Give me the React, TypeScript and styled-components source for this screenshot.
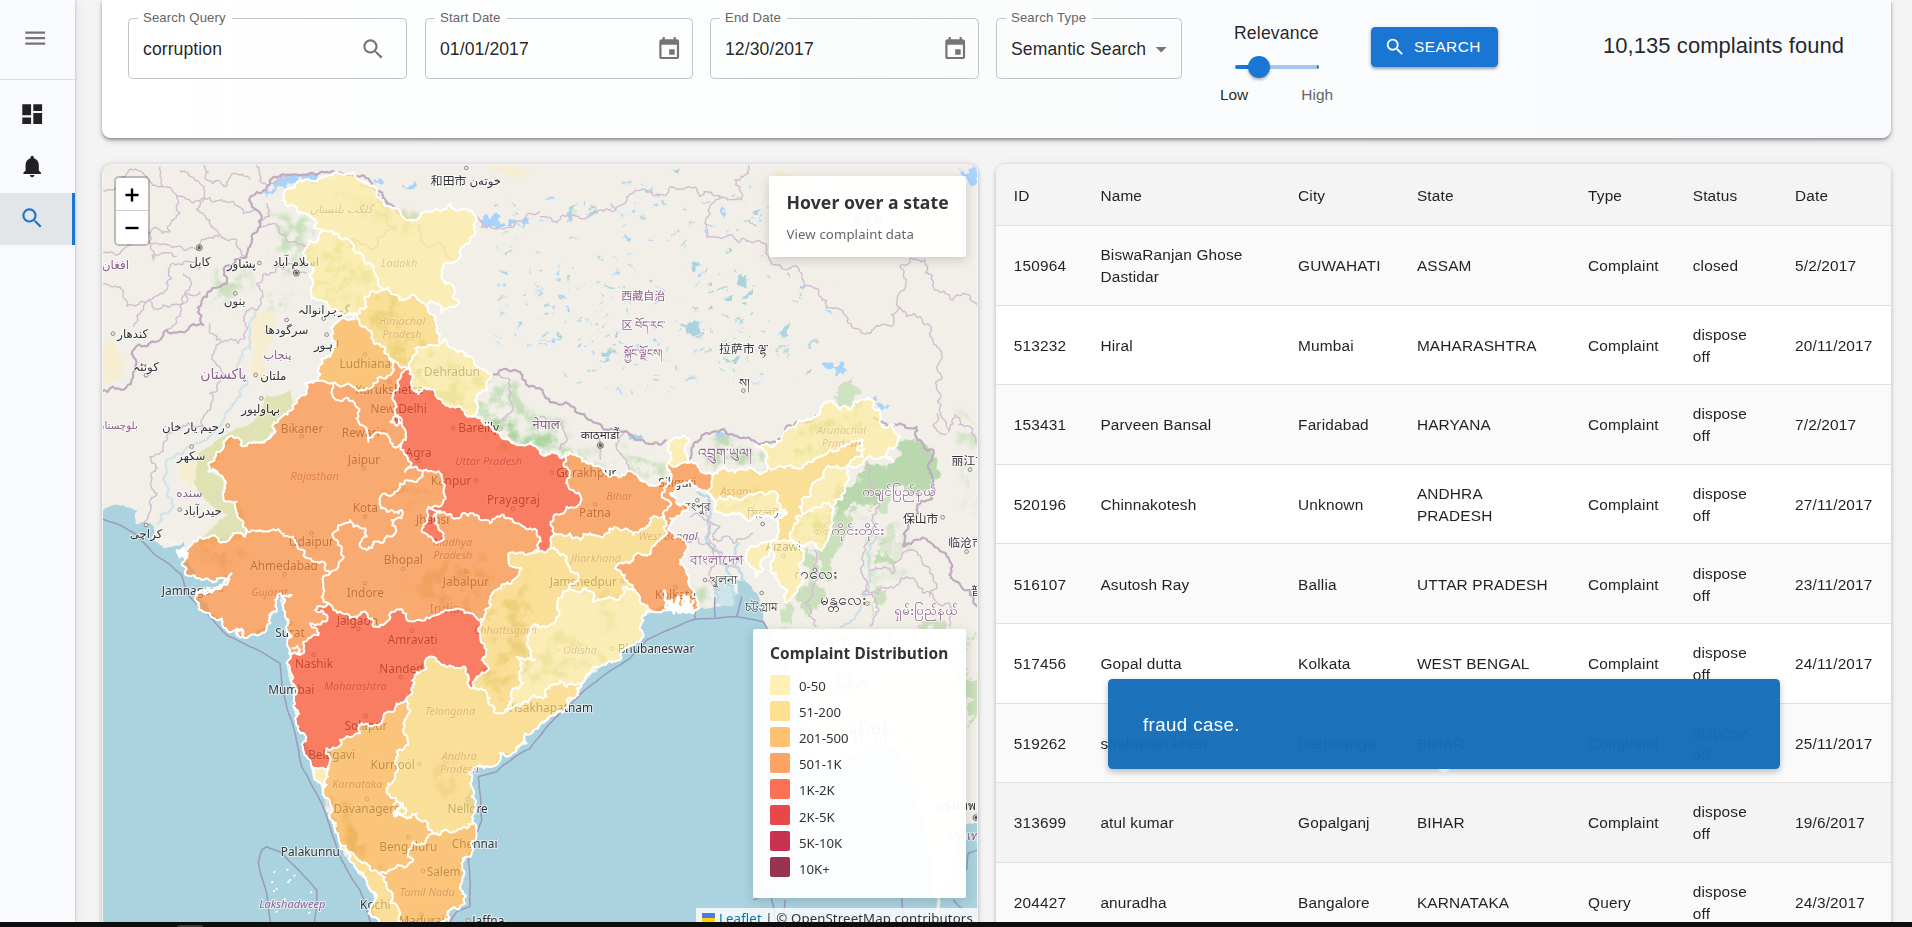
import React from 'react';
import styled, { createGlobalStyle } from 'styled-components';
import { MdArrowDropDown, MdDashboard, MdEvent, MdMenu, MdNotifications, MdSearch } from 'react-icons/md';

const GlobalStyle = createGlobalStyle`
  *, *::before, *::after { box-sizing: border-box; }
  html, body { margin: 0; height: 100%; overflow: hidden; }
  body {
    background: #f4f4f4;
    color: rgba(0, 0, 0, 0.87);
    font-family: "Liberation Sans", Arial, Helvetica, sans-serif;
    font-size: 15.4px;
  }
`;

/* ---------- page frame ---------- */

const Screen = styled.div`
  display: flex;
  flex-direction: column;
  width: 1912px;
  height: 927px;
  overflow: hidden;
`;

const Shell = styled.div`
  display: flex;
  height: 922px;
  overflow: hidden;
`;

const Dock = styled.div`
  flex: 1;
  background: #0e0e0e;
  padding: 3px 0 0 177px;
`;

const DockHandle = styled.div`
  width: 26px;
  height: 2px;
  border-radius: 6px 6px 0 0;
  background: #3c3c3c;
`;

const Sidebar = styled.nav`
  display: flex;
  flex-direction: column;
  flex: none;
  width: 75px;
  background: #f8fafd;
  box-shadow: 1px 0 2px rgba(0, 0, 0, 0.14), 3px 0 14px rgba(0, 0, 0, 0.05);
  z-index: 1;
`;

const MenuToggle = styled.div`
  display: flex;
  height: 80px;
  padding: 25px 0 0 22px;
  border-bottom: 1px solid #dcdee0;
  color: #757575;
  font-size: 26.4px;
`;

const NavList = styled.div`
  padding-top: 9px;
`;

const NavItem = styled.div<{ $active?: boolean }>`
  display: flex;
  align-items: center;
  height: 52px;
  padding: 0 0 1px 18.6px;
  font-size: 26.4px;
  color: ${p => (p.$active ? '#1976d2' : '#212121')};
  background: ${p => (p.$active ? '#e3e5e8' : 'transparent')};
  border-right: 3px solid ${p => (p.$active ? '#1976d2' : 'transparent')};
`;

const Main = styled.main`
  display: flex;
  flex-direction: column;
  width: 1837px;
  padding: 0 21px 0 27px;
`;

/* ---------- search form ---------- */

const FilterCard = styled.section`
  display: flex;
  align-items: flex-start;
  flex: none;
  height: 138px;
  padding: 18px 0 0 26px;
  border-radius: 0 0 9px 9px;
  background: linear-gradient(90deg, #ffffff 0%, #fbfdfd 50%, #f8fafd 100%);
  box-shadow: 0 2px 3px rgba(0, 0, 0, 0.3), 0 3px 6px rgba(0, 0, 0, 0.16);
`;

const Field = styled.div<{ $width: number; $gap?: number; $end?: number }>`
  position: relative;
  display: flex;
  align-items: center;
  justify-content: space-between;
  flex: none;
  width: ${p => p.$width}px;
  height: 61px;
  margin-right: ${p => p.$gap ?? 18}px;
  padding: 1px ${p => p.$end ?? 10}px 0 14px;
  border: 1px solid #c3c4c4;
  border-radius: 4.4px;
  font-size: 17.6px;
  letter-spacing: 0.08px;
`;

const FieldLabel = styled.label`
  position: absolute;
  top: -10px;
  left: 9px;
  padding: 0 6px 0 5px;
  background: #fdfefe;
  color: #666;
  font-size: 13.2px;
  line-height: 17px;
  letter-spacing: 0.12px;
`;

const FieldIcon = styled.span`
  display: flex;
  color: #757575;
  font-size: 26.4px;
`;

const Relevance = styled.div`
  display: flex;
  flex-direction: column;
  width: 116px;
  margin-left: 37px;
  padding-top: 5px;
`;

const RelevanceTitle = styled.div`
  padding-left: 15px;
  font-size: 17.6px;
  line-height: 20px;
  letter-spacing: 0.16px;
`;

const Track = styled.div`
  display: flex;
  align-items: center;
  width: 84px;
  height: 4px;
  margin: 22px 0 0 16px;
  border-radius: 2px;
  background: linear-gradient(90deg, #1976d2 0 24px, #a4c8ee 24px 82px, #1976d2 82px);
`;

const Thumb = styled.div`
  width: 22px;
  height: 22px;
  margin-left: 13px;
  border-radius: 50%;
  background: #1976d2;
  box-shadow: 0 2px 3px rgba(0, 0, 0, 0.3);
`;

const Marks = styled.div`
  display: flex;
  justify-content: space-between;
  padding: 17px 2px 0 1px;
  font-size: 15.4px;
  line-height: 18px;
`;

const MarkMuted = styled.span`
  color: #666;
`;

const SearchButton = styled.button`
  display: flex;
  align-items: center;
  gap: 8px;
  width: 127px;
  height: 40px;
  margin: 9px 0 0 36px;
  padding: 0 0 0 13px;
  border: 0;
  border-radius: 4.4px;
  background: #1976d2;
  color: #fff;
  font-family: inherit;
  font-size: 15.4px;
  letter-spacing: 0.44px;
  box-shadow: 0 2px 3px rgba(0, 0, 0, 0.3), 0 1px 5px rgba(0, 0, 0, 0.12);

  svg { font-size: 22px; }
`;

const ResultCount = styled.div`
  margin: 14px 0 0 105px;
  font-size: 22px;
  line-height: 28px;
  letter-spacing: 0.06px;
  white-space: nowrap;
`;

const Panels = styled.div`
  display: flex;
  align-items: flex-start;
  gap: 18px;
  padding-top: 26px;
`;

/* ---------- complaints table ---------- */

const TableCard = styled.section`
  position: relative;
  width: 895px;
  height: 790px;
  border-radius: 9px 9px 0 0;
  background: #fff;
  box-shadow: 0 1px 4px rgba(0, 0, 0, 0.22), 0 0 12px rgba(0, 0, 0, 0.05);
`;

const TableRow = styled.div<{ $tone: string; $head?: boolean }>`
  display: grid;
  grid-template-columns: 86.6px 197.7px 118.8px 171.2px 104.7px 102.3px 113.3px;
  align-items: center;
  height: ${p => (p.$head ? 62 : 79.6)}px;
  padding-top: 2px;
  border-bottom: 1px solid #e0e0e0;
  border-radius: ${p => (p.$head ? '9px 9px 0 0' : 0)};
  background: ${p => p.$tone};
`;

const Cell = styled.div`
  padding: 0 0 0 17.8px;
  line-height: 22px;
  letter-spacing: 0.16px;
`;

const Tooltip = styled.div`
  position: absolute;
  top: 515px;
  left: 112px;
  display: flex;
  align-items: center;
  width: 672px;
  height: 90px;
  padding: 1px 35px 0;
  border-radius: 4.4px;
  background: rgba(21, 109, 184, 0.97);
  color: #fff;
  font-size: 18.7px;
  letter-spacing: 0.4px;
  box-shadow: 0 3px 7px rgba(0, 0, 0, 0.26);
`;

const TooltipArrow = styled.span`
  position: absolute;
  top: 90px;
  left: 330px;
  border: 6px solid transparent;
  border-top: 5px solid #dfe9f2;
  border-bottom: 0;
`;

/* ---------- map ---------- */

const MapCard = styled.section`
  position: relative;
  width: 876px;
  height: 790px;
  padding: 1px;
  border-radius: 9px 9px 0 0;
  font-family: "Noto Sans", "Noto Sans CJK SC", "DejaVu Sans", sans-serif;
  box-shadow: 0 1px 4px rgba(0, 0, 0, 0.26), 0 0 12px rgba(0, 0, 0, 0.05);
`;

const MapCanvas = styled.svg`
  display: block;
  border-radius: 8px 8px 0 0;
`;

const ZoomControl = styled.div`
  position: absolute;
  top: 12px;
  left: 12px;
  width: 36px;
  border: 2px solid rgba(0, 0, 0, 0.22);
  border-radius: 5px;
  background-clip: padding-box;
`;

const ZoomButton = styled.div<{ $first?: boolean }>`
  display: flex;
  align-items: center;
  justify-content: center;
  height: 33px;
  padding-top: 1px;
  background: #fff;
  border-bottom: ${p => (p.$first ? '1px solid #ccc' : '0')};
  border-radius: ${p => (p.$first ? '3px 3px 0 0' : '0 0 3px 3px')};
`;

const MapPanel = styled.div`
  position: absolute;
  right: 12px;
  border-radius: 2px;
  background: rgba(255, 255, 255, 0.95);
  box-shadow: 0 3px 12px rgba(0, 0, 0, 0.16);
`;

const InfoPanel = styled(MapPanel)`
  top: 12px;
  width: 197px;
  height: 81px;
  padding: 13px 0 0 17.5px;
`;

const InfoTitle = styled.div`
  color: #333;
  font-size: 17.6px;
  font-weight: 700;
  line-height: 27px;
  letter-spacing: 0.07px;
  white-space: nowrap;
`;

const InfoText = styled.div`
  margin-top: 8px;
  color: #666;
  font-size: 13.2px;
  line-height: 20px;
  letter-spacing: 0.12px;
`;

const LegendPanel = styled(MapPanel)`
  top: 465px;
  width: 213px;
  height: 269px;
  padding: 12px 0 0 17px;
`;

const LegendTitle = styled.div`
  margin-bottom: 7px;
  color: #333;
  font-size: 15.4px;
  font-weight: 700;
  line-height: 25px;
  letter-spacing: 0.12px;
  white-space: nowrap;
`;

const LegendRow = styled.div`
  display: flex;
  align-items: center;
  height: 26.1px;
  gap: 9px;
  color: #333;
  font-size: 13.2px;
`;

const Swatch = styled.span<{ $color: string }>`
  width: 20px;
  height: 20px;
  margin-top: -3px;
  border-radius: 2px;
  background: ${p => p.$color};
  opacity: 0.8;
`;

const Attribution = styled.div`
  position: absolute;
  top: 744px;
  right: 1px;
  display: flex;
  align-items: center;
  width: 281px;
  height: 20px;
  padding-left: 6px;
  background: rgba(255, 255, 255, 0.8);
  color: #333;
  font-size: 13.2px;
  letter-spacing: 0.13px;
  white-space: pre;

  a { color: #0078a8; text-decoration: underline; }
`;

const Flag = styled.span`
  width: 13px;
  height: 9px;
  margin: -2px 4px 0 0;
  background: linear-gradient(#4c7be1 50%, #ffd500 50%);
`;

/* ---------- map geometry ---------- */

type Point = [number, number];

const pts = (source: string): Point[] =>
  source.trim().split(/\s+/).map(pair => pair.split(',').map(Number) as Point);

const noise = (a: number, b: number) => {
  const value = Math.sin(a * 12.9898 + b * 78.233) * 43758.5453;
  return value - Math.floor(value) - 0.5;
};

// Splits a segment into a ragged line; both directions give the same line.
function rough(a: Point, b: Point, amount: number): Point[] {
  if (a[0] > b[0] || (a[0] === b[0] && a[1] > b[1])) {
    return rough(b, a, amount).reverse();
  }
  const dx = b[0] - a[0];
  const dy = b[1] - a[1];
  const length = Math.hypot(dx, dy);
  if (!(length >= 9)) return [a, b];
  const shift = noise(a[0] + b[0], a[1] + b[1]) * amount;
  const mid: Point = [
    Math.round((a[0] + dx / 2 - dy * shift) * 10) / 10,
    Math.round((a[1] + dy / 2 + dx * shift) * 10) / 10,
  ];
  return [...rough(a, mid, amount), ...rough(mid, b, amount).slice(1)];
}

const stateRoughness = 0.62;

const roughLine = (line: Point[], amount = stateRoughness): Point[] =>
  line.flatMap((p, i) => (i === 0 ? [p] : rough(line[i - 1], p, amount).slice(1)));

const toPath = (line: Point[]) => 'M' + line.map(p => p.join(',')).join('L');
const line = (source: string, amount?: number) => toPath(roughLine(pts(source), amount));

const arcs: Record<string, string> = {
  ladakhOuter: '668,212 640,205 652,190 635,172 598,160 590,140 560,137 549,118 566,85 592,65 630,62 655,55 680,48 710,34 740,42 758,36 780,62 810,78 850,120 890,145 915,178 955,176 980,155 1040,147 1052,132 1065,150 1100,148 1128,172 1124,200 1110,245 1085,262 1065,305 1030,315 1025,345 1035,372 1062,382 1058,410 1076,432 1050,440 1025,458 1015,432 980,436',
  ladakhHp: '980,436 960,422 935,403 915,420 890,405 865,385',
  ladakhJk: '865,385 830,350 820,318 790,295 760,265 748,238 725,238 700,215 668,212',
  jkWest: '668,212 655,238 615,265 628,310 630,350 632,398 680,425 710,450 770,462',
  jkHp: '770,462 800,440 795,410 835,395 865,385',
  pbHp: '770,462 778,485 805,510 820,545 850,560 868,595',
  hpEast: '980,436 1000,465 1012,500 1020,550',
  hpUk: '1020,550 985,555 945,565 935,600 930,628',
  hpHr: '930,628 905,625 885,605 868,595',
  ukOuter: '1020,550 1035,537 1070,575 1110,590 1145,625 1175,642 1165,660 1137,700 1130,730 1110,768',
  ukUp: '1110,768 1100,768 1050,742 1010,710 985,688 955,702 935,685 940,650 930,628',
  pbWest: '770,462 745,480 705,490 700,520 708,560 690,590 655,620 650,662',
  pbRj: '650,662 670,663 698,670',
  pbHr: '698,670 720,680 745,670 770,690 800,685 820,670 840,650 875,640 880,615 868,595',
  hrRj: '698,670 698,705 735,715 765,735 770,775 800,810 805,845 820,825 850,820 865,830 880,860 905,850',
  hrUp: '930,628 900,655 893,690 890,740 905,790 918,820 918,840 905,850',
  rjWest: '650,662 615,668 600,710 580,745 540,775 500,838 460,845 425,858 400,832 370,845 360,875 325,910 325,935 370,955 368,1000 380,1025 410,1025 412,1060 430,1085 440,1110',
  rjGj: '440,1110 480,1110 520,1108 545,1120 580,1130 590,1150 610,1170 625,1195 650,1205 690,1240',
  rjMp: '690,1240 715,1220 730,1195 725,1160 710,1140 715,1095 735,1090 750,1080 760,1100 795,1105 800,1130 780,1160 800,1170 820,1145 850,1148 870,1130 875,1080 905,1075 905,1050 860,1055 840,1025 855,1000 920,960 970,932',
  rjUp: '905,850 912,880 935,910 915,935 950,920 970,932',
  mpUp: '970,932 1000,935 1025,945 1035,975 1015,1040 985,1045 985,1070 970,1095 985,1130 1020,1145 1025,1115 1005,1090 1010,1060 1055,1065 1075,1075 1090,1058 1120,1060 1160,1080 1170,1090 1190,1070 1230,1075 1250,1090 1290,1105 1310,1120 1315,1150 1300,1178',
  upJh: '1362,1120 1352,1145 1350,1165',
  upCg: '1350,1165 1325,1172 1300,1178',
  upBr: '1362,1120 1352,1085 1360,1070 1400,1040 1445,1018 1415,990 1400,960 1410,940 1393,920 1395,885 1410,878',
  upNorth: '1110,768 1150,790 1200,820 1250,855 1320,880 1365,880 1385,895 1410,878',
  brNorth: '1410,878 1440,890 1460,910 1510,935 1540,945 1580,935 1630,965 1680,970 1710,970',
  brWb: '1710,970 1685,1005 1705,1020 1700,1050 1690,1065',
  brJh: '1690,1065 1650,1075 1635,1105 1600,1125 1560,1110 1530,1105 1510,1130 1470,1120 1440,1140 1410,1120 1362,1120',
  skOuter: '1705,908 1705,850 1720,835 1750,825 1765,850 1762,908',
  skWb: '1705,908 1762,908',
  wbWest: '1705,908 1715,945 1710,970',
  wbNorth: '1762,908 1800,930 1840,942',
  wbAs: '1840,942 1835,975 1825,1000',
  wbEast: '1825,1000 1790,990 1770,960 1730,975 1710,1000 1730,1030 1765,1050 1740,1068 1710,1075 1705,1110 1725,1135 1750,1140 1740,1200 1760,1240 1765,1270 1780,1290 1780,1360',
  wbCoast: '1780,1360 1750,1355 1710,1330 1690,1350 1660,1355',
  wbJh: '1690,1065 1700,1085 1700,1115 1690,1130 1665,1155 1600,1190 1565,1210 1545,1225 1575,1245 1585,1270 1605,1290',
  wbOd: '1605,1290 1620,1325 1645,1345 1660,1355',
  jhOd: '1605,1290 1570,1280 1550,1320 1520,1315 1480,1325 1475,1295 1410,1290',
  jhCg: '1410,1290 1430,1265 1410,1225 1400,1190 1370,1170 1350,1165',
  odCg: '1410,1290 1385,1310 1370,1345 1360,1390 1330,1398 1300,1395 1280,1430 1285,1460 1305,1500 1250,1490 1265,1530 1270,1570 1235,1620 1215,1655',
  odAp: '1215,1655 1260,1640 1300,1605 1340,1610 1355,1575 1380,1560 1400,1580 1425,1575 1445,1570',
  odCoast: '1660,1355 1625,1370 1620,1410 1630,1430 1590,1460 1560,1500 1500,1520 1445,1570',
  apCoast: '1445,1570 1400,1620 1350,1670 1320,1692 1275,1720 1280,1750 1250,1770 1200,1780 1175,1820 1130,1820 1110,1870 1115,1910 1125,1955 1120,1990',
  apTn: '1120,1990 1100,2005 1060,2015 1020,2025 1000,2020',
  apKa: '1000,2020 985,1990 950,1960 910,1970 880,1960 900,1930 870,1910 865,1870 885,1840 890,1800 915,1760 910,1690 930,1650 920,1615',
  apMh: '920,1615 940,1580 945,1545 980,1525 980,1495 1020,1510 1060,1520 1095,1520 1100,1570 1120,1585',
  apCg: '1120,1585 1160,1600 1165,1630 1185,1660 1215,1655',
  mhCg: '1120,1585 1130,1550 1165,1530 1145,1500 1150,1450 1140,1400 1150,1378',
  mhMp: '1150,1378 1110,1360 1050,1350 1010,1365 950,1380 920,1380 905,1348 875,1355 850,1395 820,1400 815,1375 750,1375 700,1350 685,1330',
  mpCg: '1150,1378 1155,1350 1170,1310 1190,1290 1235,1270 1265,1225 1225,1195 1230,1178 1300,1178',
  mpGj: '685,1330 665,1310 670,1285 690,1240',
  mhGj: '685,1330 645,1350 680,1365 630,1390 655,1425 610,1445 600,1485 568,1480',
  gjCoast: '440,1110 435,1130 370,1145 280,1142 230,1170 255,1195 245,1215 290,1255 340,1268 395,1240 380,1275 340,1290 290,1295 285,1315 330,1360 380,1410 430,1430 500,1400 530,1355 525,1320 540,1300 575,1305 550,1310 550,1345 565,1390 575,1430 568,1480',
  mhCoast: '568,1480 560,1510 575,1570 580,1640 595,1700 610,1770 635,1820',
  mhGoa: '635,1820 662,1824 685,1820',
  goaCoast: '635,1820 655,1865 668,1890',
  goaKa: '668,1890 680,1875 680,1840 685,1820',
  mhKa: '685,1820 690,1790 680,1765 720,1740 780,1720 785,1690 830,1695 850,1670 890,1630 920,1615',
  kaCoast: '668,1890 690,1930 708,1990 720,2050',
  kaKl: '720,2050 760,2080 800,2110 835,2140',
  kaTn: '835,2140 870,2130 920,2120 940,2100 925,2070 940,2045 975,2050 1000,2020',
  klCoast: '720,2050 760,2110 800,2170 820,2230 840,2300',
  klTn: '835,2140 860,2175 870,2230 895,2245 900,2300',
  klEnd: '840,2300 900,2300',
  tnCoast: '1120,1990 1130,2020 1120,2070 1085,2110 1090,2150 1095,2230 1050,2250 1020,2300',
  tnEnd: '900,2300 1020,2300',
  asAr: '2240,920 2290,890 2295,865 2270,870 2290,840 2250,850 2190,870 2140,905 2110,915 2070,915 2005,925',
  arOuter: '2005,925 2000,880 1965,852 2000,850 2045,840 2060,810 2095,780 2140,772 2170,730 2200,722 2255,745 2280,720 2305,712 2320,745 2340,790 2400,830 2365,865 2380,905 2350,890 2300,895 2240,920',
  asNorth: '2005,925 1970,935 1840,942',
  asBd: '1825,1000 1836,1012 1845,1025',
  asMl: '1845,1025 1860,1010 1930,1015 1970,1000 2010,995 2040,1030 2060,1060',
  mlBd: '2060,1060 2020,1075 1970,1065 1845,1055 1845,1025',
  asTr: '2060,1060 2025,1080 2022,1140',
  asMz: '2022,1140 2045,1142 2072,1140',
  asMn: '2072,1140 2080,1100 2115,1060',
  asNl: '2115,1060 2098,1040 2130,1010 2150,960 2240,920',
  nlOuter: '2240,920 2235,975 2225,1020 2195,1040',
  nlMn: '2195,1040 2150,1042 2115,1060',
  mnOuter: '2195,1040 2200,1055 2190,1100 2165,1172 2105,1160 2072,1140',
  mzOuter: '2072,1140 2105,1170 2100,1240 2085,1300 2060,1330 2035,1260 2020,1200 2015,1170 2022,1140',
  trOuter: '2022,1140 1980,1150 1940,1180 1945,1210 1960,1225 1970,1250 1990,1230 1992,1195 2015,1170',
};

const shades = ['#ffeda0', '#fed976', '#feb24c', '#fd8d3c', '#fc4e2a', '#e31a1c', '#bd0026', '#800026'];
const ranges = ['0-50', '51-200', '201-500', '501-1K', '1K-2K', '2K-5K', '5K-10K', '10K+'];

// Each state: shade index, then the arcs of its outline in order.
const states: [number, string][] = [
  [0, 'ladakhOuter ladakhHp ladakhJk'],
  [0, 'jkWest jkHp ladakhJk'],
  [1, 'pbHp hpHr hpUk hpEast ladakhHp jkHp'],
  [0, 'ukOuter ukUp hpUk'],
  [2, 'pbHp pbHr pbRj pbWest'],
  [3, 'pbHr hpHr hrUp hrRj'],
  [3, 'pbRj hrRj rjUp rjMp rjGj rjWest'],
  [4, 'hrUp rjUp mpUp upCg upJh upBr upNorth ukUp'],
  [3, 'rjMp mpUp mpCg mhMp mpGj'],
  [3, 'rjGj mpGj mhGj gjCoast'],
  [3, 'brNorth brWb brJh upBr'],
  [0, 'skOuter skWb'],
  [3, 'skWb wbNorth wbAs wbEast wbCoast wbOd wbJh brWb wbWest'],
  [1, 'brJh upJh jhCg jhOd wbJh'],
  [1, 'jhCg upCg mpCg mhCg apCg odCg'],
  [0, 'jhOd odCg odAp odCoast wbOd'],
  [1, 'odAp apCoast apTn apKa apMh apCg'],
  [4, 'mhMp mhGj mhCoast mhGoa mhKa apMh mhCg'],
  [0, 'goaCoast goaKa mhGoa'],
  [2, 'mhKa apKa kaTn kaKl kaCoast goaKa'],
  [1, 'kaKl klTn klEnd klCoast'],
  [2, 'kaTn apTn tnCoast tnEnd klTn'],
  [0, 'asAr arOuter'],
  [1, 'asNorth wbAs asBd asMl asTr asMz asMn asNl asAr'],
  [0, 'asMl mlBd'],
  [0, 'asNl nlOuter nlMn'],
  [0, 'nlMn asMn mnOuter'],
  [0, 'mzOuter asMz'],
  [0, 'trOuter'],
];

// Joins arcs end to end, turning each one round when its far end meets the pen.
function ring(names: string): string {
  const list = names.split(' ').map(name => roughLine(pts(arcs[name])));
  const same = (a: Point, b: Point) => Math.hypot(a[0] - b[0], a[1] - b[1]) < 1;
  const rest = list.slice(1);
  let out = list[0];
  while (rest.length) {
    const end = out[out.length - 1];
    let index = rest.findIndex(arc => same(arc[0], end));
    if (index >= 0) {
      out = out.concat(rest.splice(index, 1)[0].slice(1));
      continue;
    }
    index = rest.findIndex(arc => same(arc[arc.length - 1], end));
    if (index < 0) break;
    out = out.concat(rest.splice(index, 1)[0].reverse().slice(1));
  }
  return toPath(out) + 'Z';
}

const coast =
  '9,1052 70,1035 112,1052 105,1090 160,1098 152,1140 190,1165 250,1145 255,1195 290,1255 340,1262 400,1240 380,1280 290,1300 330,1360 380,1410 430,1430 500,1400 530,1355 540,1300 560,1390 568,1480 575,1570 580,1640 595,1700 635,1820 668,1890 708,1990 720,2050 800,2170 820,2230 840,2300 1020,2300 1050,2250 1095,2230 1085,2110 1120,2070 1130,2020 1120,1990 1110,1870 1130,1820 1175,1820 1200,1780 1250,1770 1280,1750 1275,1720 1350,1670 1445,1570 1500,1520 1560,1500 1630,1430 1620,1390 1660,1355 1710,1330 1780,1355 1830,1345 1880,1335 1915,1300 1905,1265 1950,1275 1975,1310 1990,1370 2005,1410 2060,1480 2090,1600 2100,1720 2150,1830 2240,1790 2330,1750 2400,1780 2440,1900 2480,2020 2490,2140 2500,2300 2530,2300 2520,2200 2560,2100 2580,2000 2640,1990';
const landPath = line(coast, 0.3) + 'L2640,0L0,0L0,1052Z';

const desert =
  '440,1110 435,1130 380,1145 290,1138 340,1100 385,1065 340,1040 280,960 295,880 360,835 430,800 480,760 500,705 570,690 585,740 540,775 500,838 425,858 400,832 360,875 325,930 370,955 380,1025 410,1025 440,1110';

const plains = [
  '0,530 50,545 80,600 70,650 0,690 0,530',
  '450,465 530,460 520,520 490,600 500,680 450,640 450,540 450,465',
  '1140,10 1290,10 1265,50 1190,25 1140,10',
  '2030,25 2070,40 2050,60 2025,45 2030,25',
  '240,910 290,900 270,980 235,950 240,910',
];

const forests: [string, string, number][] = [
  ['#b9d8ad', '2200,1050 2230,960 2300,900 2380,905 2395,840 2440,840 2490,865 2500,960 2460,1000 2400,985 2340,975 2300,1050 2260,1040 2220,1075', 1],
  ['#c4deb6', '2160,1172 2195,1075 2250,1045 2235,1120 2210,1180 2190,1260 2165,1240', 0.9],
  ['#c4deb6', '2100,1175 2150,1172 2140,1260 2150,1350 2100,1350 2090,1300', 0.9],
  ['#bcdab0', '2310,1195 2350,1145 2385,1200 2340,1225', 0.9],
  ['#c4deb6', '2040,1330 2080,1340 2080,1400 2060,1400', 0.8],
  ['#c4deb6', '2330,1010 2380,990 2375,1040 2340,1070', 0.8],
  ['#c4deb6', '2470,1385 2530,1370 2530,1410 2460,1410', 0.8],
  ['#c4deb6', '2600,1440 2632,1410 2632,1620 2605,1700 2598,1560', 0.9],
  ['#c4deb6', '2320,1310 2370,1290 2350,1330 2320,1370', 0.8],
  ['#c4deb6', '2320,1110 2380,1090 2390,1140 2340,1150', 0.6],
  ['#cbe0bd', '2205,700 2240,660 2270,690 2290,730 2250,740 2205,722', 0.9],
];

const textures: [string, string, number][] = [
  ['#b5d6a8', '1770,905 1830,830 1930,850 1990,900 2000,922 1850,935', 0.8],
  ['#bcdcae', '485,150 540,180 620,175 650,200 610,270 625,360 560,350 500,270 520,200', 0.8],
  ['#bcdcae', '390,330 470,345 450,450 380,420 310,440 330,400', 0.7],
  ['#bcdcae', '490,440 560,430 630,400 640,380 600,380 500,410', 0.8],
  ['#bcdcae', '1180,650 1250,700 1300,780 1420,850 1520,900 1680,900 1700,960 1560,930 1440,885 1330,875 1220,820 1120,750 1140,690', 0.8],
  ['#a9d09c', '1180,790 1280,835 1400,860 1540,915 1520,930 1400,872 1320,870', 0.9],
  ['#bcdab0', '1770,1310 1800,1295 1835,1300 1830,1345 1790,1350', 0.9],
  ['#bcdab0', '2290,1080 2400,1090 2420,1250 2330,1290 2290,1200', 0.4],
  ['#bcdab0', '2580,800 2632,780 2632,1060 2570,1040', 0.6],
  ['#c5cf8c', '640,270 720,250 780,320 820,380 790,430 720,440 650,380', 0.8],
  ['#ccd6a4', '690,90 780,110 880,150 970,250 900,230 800,180', 0.9],
  ['#bcbf76', '800,430 900,440 960,560 930,620 880,600 820,520', 0.8],
  ['#bcc98a', '940,590 1060,580 1160,650 1120,760 1010,710', 0.8],
  ['#b5c878', '2010,880 2130,790 2250,760 2330,800 2270,830 2140,890', 0.9],
  ['#b5c878', '1850,1030 1960,1010 2040,1035 1990,1060 1860,1050', 0.9],
  ['#b5c878', '2100,1080 2180,1060 2160,1160 2090,1140', 0.9],
  ['#b5a864', '1160,1400 1240,1250 1290,1420 1200,1640 1150,1560', 0.7],
  ['#b8b870', '1290,1500 1450,1440 1540,1490 1400,1560 1290,1590', 0.6],
  ['#b8b870', '1450,1310 1560,1320 1600,1400 1500,1420', 0.5],
  ['#a89850', '690,1900 730,1980 760,2080 830,2130 800,2040 730,1940', 0.6],
  ['#b09050', '880,980 960,960 1010,1010 940,1060 870,1040', 0.4],
  ['#b09050', '900,1280 1040,1220 1180,1240 1150,1340 980,1350', 0.35],
  ['#a08050', '270,1170 380,1160 480,1170 400,1220 300,1210', 0.3],
  ['#b09050', '1010,1860 1090,1800 1070,1920 1030,1960', 0.35],
];

const waters: string[] = [
  '490,100 520,70 590,45 600,58 530,85 500,115',
  '600,45 660,40 655,55 610,58',
  '1135,180 1200,165 1240,190 1290,175 1270,205 1200,200 1150,200',
  '820,60 850,62 845,75 825,70',
  '905,75 940,65 930,90 908,82',
  '2575,25 2632,20 2632,70 2605,68',
  '1870,590 1925,585 1900,600 1870,612',
  '1740,495 1785,480 1800,510 1760,525',
  '1505,575 1540,575 1530,592 1505,588',
  '2165,610 2230,605 2240,635 2185,628',
  '2105,630 2135,628 2130,640 2108,640',
  '1915,355 1940,345 1935,385 1910,370',
  '1775,310 1800,315 1785,335',
  '2325,705 2370,735 2355,745 2325,720',
  '1635,90 1665,75 1660,98 1640,100',
  '1710,25 1740,25 1730,40',
  '1590,820 1630,830 1625,845 1600,845',
  '1850,815 1880,820 1870,832 1850,828',
];

const borders: string[] = [
  '0,695 80,680 95,580 150,550 200,510 260,512 310,495 325,395 380,370 375,320 440,290 480,200 470,150 450,125 500,80 570,45 640,40 720,38 780,50 850,110 900,165',
  '1175,642 1210,628 1260,635 1320,685 1370,730 1420,740 1460,775 1510,808 1570,815 1620,840 1700,840',
  '1765,900 1800,840 1840,815 1900,825 1950,835 1970,850 2045,835 2090,785 2150,765',
  '2320,770 2370,800 2400,790 2450,800 2460,840 2500,870 2500,960 2450,1050 2420,1110 2410,1160 2500,1155 2540,1190 2560,1260 2610,1290 2632,1340',
];

const thinBorders: string[] = [
  '1320,170 1370,188 1440,175 1500,150 1540,155 1580,110 1650,95 1730,88 1800,110 1860,115 1925,120 1920,80 1905,60 1945,40 1945,15',
  '1125,172 1180,205 1240,200 1290,160 1320,155',
  '1860,115 1835,130 1815,190 1820,230 1880,230 1950,245 2000,270 2040,315 2105,340 2110,385 2160,410 2230,460 2260,505 2310,520 2380,495 2395,440 2420,360 2400,320 2430,295 2475,300 2500,370 2560,420 2590,400 2632,435',
  '2395,440 2460,470 2490,530 2510,620 2520,740 2545,815 2565,765 2610,800 2632,850',
  '2510,760 2500,800 2540,820',
  '10,90 60,80 80,40 140,50 190,80 180,20',
  '60,80 100,120 90,160 130,210 210,215 240,160 230,110 190,80',
  '240,30 300,70 310,120 290,150 330,180 350,210 410,240 440,290',
  '230,110 300,125 360,120 430,160 470,150',
  '130,210 150,250 230,260 290,270 320,235 360,230',
  '10,280 60,280 110,250 150,250 160,300 230,290',
  '9,370 60,380 80,440 150,420 200,390 210,320 300,330',
  '100,500 130,440 150,420 210,440 260,400 300,395',
  '310,15 320,60 380,80 400,40 450,60',
  '470,15 480,60 520,70 570,45',
  '200,510 240,440 270,380 250,340',
  '330,490 350,540 370,545 360,620 330,700 330,750 310,800 200,830 150,890 155,960 170,1000 145,1070 120,1095',
  '370,545 415,550 430,470 470,450 470,370 530,320 570,310 620,340',
  '500,130 480,200 560,240 620,260',
  '1190,640 1230,660 1240,740 1200,790',
  '1320,770 1380,780 1400,830 1380,870',
  '1480,820 1510,860 1500,900',
  '1570,815 1560,880 1590,930',
  '1770,1070 1820,1080 1860,1100 1840,1140 1900,1150 1960,1120',
  '1830,1020 1830,1120 1850,1200 1860,1290',
  '1750,1140 1830,1160 1870,1210 1930,1200',
  '2300,910 2310,960 2330,1060 2300,1150 2290,1250 2330,1330 2310,1400',
  '2140,1170 2150,1260 2150,1400',
  '2300,1290 2420,1250 2470,1300 2540,1330 2550,1400',
  '2310,1230 2380,1240 2430,1170 2500,1250 2490,1310',
  '860,120 890,210 830,260 740,240',
  '960,190 980,260 1030,260 1060,300',
  '780,70 830,90 860,130',
];

const maritime: string[] = [
  '9,1078 60,1095 110,1125 160,1180 205,1210 245,1245 260,1300 340,1380 380,1425 540,1510 550,1600 580,1700 605,1820 665,1930 690,2000 720,2090 780,2190 815,2300',
  '1040,2300 1070,2255 1110,2240 1105,2100 1145,1980 1135,1850 1190,1835 1210,1815 1290,1765 1360,1680 1455,1590 1590,1495 1640,1440 1785,1378 1910,1370 1990,1385 2010,1420',
  '1785,1378 1780,1330',
  '1845,1372 1845,1310',
  '1910,1370 1925,1310',
  '515,2300 500,2200 475,2105 485,2070 500,2060 540,2075 650,2190 650,2240 640,2300',
  '1960,2220 2010,2200 2030,2300',
  '2055,2220 2050,2300',
  '2405,2210 2410,2260 2440,2300',
  '2560,2220 2610,2270 2632,2300',
  '2632,2070 2605,2080 2600,2130',
];

// Small lakes scattered over the plateau.
const lakes: { x: number; y: number; rx: number; ry: number; salt: boolean; turn: number }[] = [];
for (let i = 0; i < 360; i += 1) {
  const x = 1180 + (noise(i, 3) + 0.5) * 1010;
  const y = 60 + (noise(i, 7) + 0.5) * 640;
  const outside = (x < 1340 && y > 560) || (x > 1960 && y > 260 && i % 3 > 0) || (y < 120 && i % 3 > 0);
  if (!outside) {
    lakes.push({
      x,
      y,
      rx: 2 + (noise(i, 11) + 0.5) ** 2 * 9,
      ry: 1.6 + (noise(i, 13) + 0.5) * 3.4,
      salt: i % 5 === 0,
      turn: noise(i, 17) * 90,
    });
  }
}

type Kind = 'city' | 'state' | 'region';
const labels: [string, number, number, Kind, number?][] = [
  ['和田市 خوتەن', 1098, 74, 'city'],
  ['گلگت بلتستان', 724, 158, 'state'],
  ['Ladakh', 898, 320, 'state', 33],
  ['افغان', 46, 328, 'region', 36],
  ['کابل', 300, 318, 'city'],
  ['پشاور', 424, 324, 'city'],
  ['اسلام آباد', 588, 318, 'city'],
  ['بنوں', 404, 436, 'city'],
  ['گوجرانوالہ', 672, 462, 'city'],
  ['سرگودها', 560, 522, 'city'],
  ['لاہور', 680, 566, 'city'],
  ['پنجاب', 532, 596, 'region', 34],
  ['کندهار', 98, 534, 'city'],
  ['کوئٹہ', 138, 632, 'city'],
  ['پاکستان', 370, 656, 'region', 42],
  ['ملتان', 520, 660, 'city'],
  ['بہاولپور', 482, 758, 'city'],
  ['رحیم یار خان', 280, 814, 'city'],
  ['بلوچستان', 52, 808, 'region', 31],
  ['سکهر', 274, 900, 'city'],
  ['سنده', 268, 1010, 'region', 36],
  ['حیدرآباد', 308, 1066, 'city'],
  ['کراچی', 138, 1134, 'city'],
  ['Himachal', 906, 496, 'state', 33],
  ['Pradesh', 906, 534, 'state'],
  ['Ludhiana', 796, 624, 'city'],
  ['Kurukshetra', 868, 702, 'city'],
  ['Dehradun', 1056, 648, 'city'],
  ['New Delhi', 896, 760, 'city'],
  ['Bikaner', 606, 818, 'city'],
  ['Rewari', 782, 830, 'city'],
  ['Bareilly', 1136, 816, 'city'],
  ['Agra', 956, 890, 'city'],
  ['Jaipur', 792, 911, 'city'],
  ['Uttar Pradesh', 1166, 914, 'state'],
  ['Rajasthan', 644, 960, 'state'],
  ['Kanpur', 1053, 975, 'city'],
  ['Prayagraj', 1240, 1033, 'city'],
  ['Kota', 796, 1055, 'city'],
  ['Jhansi', 998, 1092, 'city'],
  ['Udaipur', 634, 1158, 'city'],
  ['Madhya', 1058, 1158, 'state'],
  ['Pradesh', 1058, 1196, 'state'],
  ['Ahmedabad', 552, 1231, 'city'],
  ['Bhopal', 910, 1212, 'city'],
  ['Jabalpur', 1098, 1278, 'city'],
  ['Indore', 796, 1310, 'city'],
  ['Gujarat', 508, 1308, 'state'],
  ['Jamnagar', 266, 1306, 'city'],
  ['India', 1034, 1358, 'region', 38],
  ['Jalgaon', 772, 1394, 'city'],
  ['Surat', 570, 1430, 'city'],
  ['Amravati', 938, 1451, 'city'],
  ['Nashik', 642, 1524, 'city'],
  ['Nanded', 904, 1540, 'city'],
  ['Maharashtra', 766, 1589, 'state'],
  ['Mumbai', 574, 1602, 'city'],
  ['Chhattisgarh', 1216, 1421, 'state'],
  ['Telangana', 1050, 1665, 'state'],
  ['Visakhapatnam', 1350, 1655, 'city'],
  ['Solapur', 798, 1711, 'city'],
  ['Belagavi', 695, 1798, 'city'],
  ['Kurnool', 878, 1826, 'city'],
  ['Andhra', 1078, 1799, 'state'],
  ['Pradesh', 1078, 1838, 'state'],
  ['Karnataka', 772, 1885, 'state'],
  ['Davanagere', 801, 1958, 'city'],
  ['Nellore', 1103, 1958, 'city'],
  ['Bengaluru', 925, 2072, 'city'],
  ['Chennai', 1124, 2064, 'city'],
  ['Palakunnu', 631, 2087, 'city'],
  ['Salem', 1031, 2147, 'city'],
  ['Tamil Nadu', 982, 2208, 'state'],
  ['Kochi', 826, 2247, 'city'],
  ['Lakshadweep', 577, 2245, 'state', 33],
  ['Madurai', 965, 2296, 'city'],
  ['Jaffna', 1165, 2296, 'city'],
  ['Gorakhpur', 1459, 951, 'city'],
  ['Bihar', 1558, 1019, 'state'],
  ['Patna', 1485, 1071, 'city'],
  ['Siliguri', 1732, 980, 'city'],
  ['Assam', 1908, 1006, 'state'],
  ['Arunachal', 2224, 822, 'state'],
  ['Pradesh', 2224, 862, 'state'],
  ['West Bengal', 1704, 1141, 'state'],
  ['Jharkhand', 1488, 1206, 'state'],
  ['Jamshedpur', 1450, 1278, 'city'],
  ['Kolkata', 1726, 1318, 'city'],
  ['Odisha', 1440, 1482, 'state'],
  ['Bhubaneswar', 1668, 1479, 'city'],
  ['Aizawl', 2050, 1172, 'city'],
  ['नेपाल', 1338, 808, 'region', 40],
  ['काठमाडौं', 1500, 836, 'city'],
  ['འབྲུག་ཡུལ།', 1876, 894, 'region', 41],
  ['西藏自治', 1630, 420, 'region', 33],
  ['区 བོད་རང་', 1630, 506, 'region', 33],
  ['སྐྱོང་ལྗོངས།', 1630, 590, 'region', 33],
  ['拉萨市 ལྷ་', 1930, 580, 'city'],
  ['ས།', 1932, 680, 'city'],
  ['রংপুর', 1792, 1053, 'city'],
  ['সিলেট', 1988, 1073, 'city'],
  ['বাংলাদেশ', 1850, 1216, 'region', 41],
  ['খুলনা', 1870, 1272, 'city'],
  ['চট্টগ্রাম', 1984, 1352, 'city'],
  ['ကချင်ပြည်နယ်', 2396, 1008, 'region', 39],
  ['စစ်ကိုင်းတိုင်း', 2244, 1124, 'region', 42],
  ['ကလေး', 2146, 1256, 'city', 46],
  ['မန္တလေး', 2228, 1334, 'city', 47],
  ['ရှမ်းပြည်နယ်', 2476, 1366, 'region', 39],
  ['မကွေး', 2212, 1456, 'region', 40],
  ['မြန်မာ', 2256, 1584, 'region', 44],
  ['ရန်ကုန်', 2306, 1722, 'city', 46],
  ['保山市', 2462, 1090, 'city'],
  ['丽江市', 2608, 914, 'city'],
  ['临沧市', 2598, 1160, 'city'],
  ['普', 2630, 1306, 'city'],
  ['青海省', 2302, 190, 'region', 30],
  ['กรุงเทพ', 2570, 1950, 'city'],
  ['ประเทศไทย', 2630, 2040, 'region', 34],
];

const towns: Point[] = [
  [1099, 24], [478, 309], [406, 400], [560, 480], [671, 476], [680, 524], [39, 521], [138, 646], [467, 645],
  [484, 715], [383, 797], [275, 860], [239, 1049], [138, 1095], [795, 583], [869, 665], [958, 633], [605, 829],
  [852, 815], [1060, 804], [955, 902], [791, 924], [1128, 961], [1239, 1046], [795, 1070], [634, 1119],
  [553, 1243], [909, 1227], [1098, 1233], [795, 1269], [363, 1290], [775, 1407], [571, 1390], [935, 1412],
  [641, 1485], [902, 1551], [797, 1668], [958, 1812], [801, 1917], [1102, 1919], [925, 2031], [969, 2133],
  [965, 2264], [1105, 2281], [1355, 938], [1485, 1033], [1567, 1263], [1726, 1282], [1537, 1466], [1792, 1021],
  [1988, 1092], [1815, 1260], [1985, 1299], [2050, 1187], [2145, 1230], [2302, 1331], [2528, 1072], [2610, 929],
  [2600, 1175], [1930, 692], [2416, 1730], [2372, 1424],
];
const capitals: Point[] = [[298, 263], [589, 339], [894, 780], [1501, 856], [2628, 1973]];

const labelStyle: Record<Kind, { color: string; size: number; italic?: boolean }> = {
  city: { color: '#303336', size: 35.5 },
  state: { color: '#8d618b', size: 32.5, italic: true },
  region: { color: '#8d618b', size: 33 },
};

const hiddenArcs = ['klEnd', 'tnEnd'];

const closed = (shape: string) => shape + ' ' + shape.split(' ')[0];

const IndiaMap = () => (
  <MapCanvas width="874" height="789" viewBox="9 15 2622 2367">
    <defs>
      <filter id="forest" x="-20%" y="-20%" width="140%" height="140%">
        <feTurbulence type="fractalNoise" baseFrequency="0.02" numOctaves="4" seed="4" result="cloud" />
        <feDisplacementMap in="SourceGraphic" in2="cloud" scale="60" xChannelSelector="R" yChannelSelector="G" />
      </filter>
      <filter id="relief" x="-25%" y="-25%" width="150%" height="150%">
        <feTurbulence type="fractalNoise" baseFrequency="0.022" numOctaves="5" seed="9" result="cloud" />
        <feDisplacementMap in="SourceGraphic" in2="cloud" scale="90" xChannelSelector="R" yChannelSelector="G" result="moved" />
        <feGaussianBlur in="moved" stdDeviation="7" result="soft" />
        <feColorMatrix in="cloud" type="matrix" values="0 0 0 0 0  0 0 0 0 0  0 0 0 0 0  0 5 0 0 -2.1" result="grain" />
        <feComposite in="soft" in2="grain" operator="in" />
      </filter>
    </defs>
    <rect x="0" y="0" width="2640" height="2400" fill="#aad3df" />
    <path d={landPath} fill="#f2efe9" />
    <path d={line(desert, 0.3)} fill="#dfe2b3" />
    {plains.map(shape => <path key={shape} d={line(shape, 0.4)} fill="#f7edd0" />)}
    <g filter="url(#forest)">
      {forests.map(([color, shape, opacity]) => (
        <path key={shape} d={line(closed(shape), 0.7)} fill={color} opacity={opacity} />
      ))}
    </g>
    <g filter="url(#relief)">
      {textures.map(([color, shape, opacity]) => (
        <path key={shape} d={line(closed(shape), 0.7)} fill={color} opacity={opacity} />
      ))}
    </g>
    <path d={line('470,450 450,520 420,600 410,720 370,780 290,850 200,900 190,960 220,1040 170,1095', 0.5)} fill="none" stroke="#c5dfe8" strokeWidth="5" />
    <path d={line('1790,990 1830,1040 1825,1120 1860,1200 1890,1290 1890,1330', 0.5)} fill="none" stroke="#b5d8e3" strokeWidth="7" />
    <path d={line('1920,1150 1900,1220 1935,1270', 0.5)} fill="none" stroke="#b5d8e3" strokeWidth="6" />
    <path d={line('1850,1330 1850,1270 1880,1260 1905,1300 1890,1340', 0.6)} fill="#cde4ea" stroke="#b5d8e3" strokeWidth="5" />
    <path d={line('2330,1130 2310,1240 2290,1330 2220,1400', 0.4)} fill="none" stroke="#b5d8e3" strokeWidth="4" />
    <g filter="url(#forest)">
      {lakes.map((lake, i) => (
        <ellipse
          key={i}
          cx={lake.x}
          cy={lake.y}
          rx={lake.rx}
          ry={lake.ry}
          fill={lake.salt ? '#a8d3fb' : '#aad3df'}
          transform={`rotate(${lake.turn} ${lake.x} ${lake.y})`}
        />
      ))}
    </g>
    {waters.map((shape, i) => (
      <path key={i} d={line(closed(shape), 0.9)} fill={i % 4 === 1 || i < 5 ? '#a8d3fb' : '#aad3df'} />
    ))}
    <g fill="none" strokeLinejoin="round">
      {thinBorders.map((shape, i) => (
        <path key={i} d={line(shape, 0.6)} stroke="#d0bdd0" strokeWidth="4" />
      ))}
      {borders.map((shape, i) => (
        <path key={i} d={line(shape, 0.5)} stroke="#bfaabf" strokeWidth="6.5" />
      ))}
      {maritime.map((shape, i) => (
        <path key={i} d={line(shape, 0.05)} stroke="#9a9bb9" strokeWidth="4.6" />
      ))}
    </g>
    <g fill="#f2efe9" stroke="#777" strokeWidth="2.5">
      {towns.map(([x, y]) => <circle key={`${x}-${y}`} cx={x} cy={y} r="5.5" />)}
    </g>
    <g fill="none" stroke="#555" strokeWidth="2.5">
      {capitals.map(([x, y]) => (
        <g key={`${x}-${y}`}>
          <circle cx={x} cy={y} r="9" />
          <circle cx={x} cy={y} r="4" fill="#555" />
        </g>
      ))}
    </g>
    <g textAnchor="middle" stroke="#fff" strokeOpacity="0.65" strokeWidth="6" strokeLinejoin="round" paintOrder="stroke">
      {labels.map(([text, x, y, kind, size]) => (
        <text
          key={`${text}-${x}-${y}`}
          x={x}
          y={y}
          fill={labelStyle[kind].color}
          fontSize={size ?? labelStyle[kind].size}
          fontStyle={labelStyle[kind].italic ? 'italic' : 'normal'}
        >
          {text}
        </text>
      ))}
    </g>
    <g opacity="0.7">
      {states.map(([shade, names]) => <path key={names} d={ring(names)} fill={shades[shade]} />)}
      <path d={line('870,785 885,768 900,772 905,790 890,797 870,785')} fill={shades[4]} />
    </g>
    <g fill="none" stroke="#fff" strokeWidth="6" strokeLinejoin="round" strokeLinecap="round">
      {Object.entries(arcs)
        .filter(([name]) => !hiddenArcs.includes(name))
        .map(([name, shape]) => <path key={name} d={line(shape)} />)}
      <path d={line('870,785 885,768 900,772 905,790 890,797 870,785')} />
      <path d={line('880,1935 905,1928 918,1945 905,1965 890,1955 882,1968 900,1940', 0.9)} />
      <path d={line('578,1465 592,1458 600,1470 588,1482', 0.9)} />
      <path d={line('985,1040 1000,1050 1020,1060 1000,1070', 0.9)} />
      <path d={line('412,1425 410,1408 425,1408 428,1425', 0.5)} strokeWidth="9" />
    </g>
    <g fill="none" stroke="#fff" strokeWidth="8" strokeLinejoin="round">
      <path d={line('1690,1290 1700,1330 1705,1350 1715,1320 1722,1360 1735,1310 1742,1358 1752,1305 1758,1358 1765,1310 1776,1358 1778,1320', 0.8)} />
      <path d={line('1708,1348 1725,1335 1742,1345 1758,1330 1775,1345', 0.9)} strokeWidth="13" />
      <path d={line('230,1180 250,1165 240,1190 262,1180 245,1172 255,1195', 0.9)} strokeWidth="9" />
      <path d={line('290,1300 310,1290 335,1298 360,1275 385,1260', 0.9)} />
      <path d={line('178,1152 200,1143 225,1148 248,1143', 0.9)} stroke="#f4f2ee" strokeWidth="14" />
    </g>
    <g fill="#fff">
      {pts('523,2136 562,2129 583,2147 517,2166 565,2166 570,2160 530,2186 522,2193 633,2197 555,2218 530,2255 682,1952 708,1998 707,2016 628,2258').map(([x, y]) => (
        <ellipse key={`${x}-${y}`} cx={x} cy={y} rx="4" ry="3" transform={`rotate(-40 ${x} ${y})`} />
      ))}
    </g>
  </MapCanvas>
);

const complaints = [
  ['150964', 'BiswaRanjan Ghose Dastidar', 'GUWAHATI', 'ASSAM', 'Complaint', 'closed', '5/2/2017'],
  ['513232', 'Hiral', 'Mumbai', 'MAHARASHTRA', 'Complaint', 'dispose off', '20/11/2017'],
  ['153431', 'Parveen Bansal', 'Faridabad', 'HARYANA', 'Complaint', 'dispose off', '7/2/2017'],
  ['520196', 'Chinnakotesh', 'Unknown', 'ANDHRA PRADESH', 'Complaint', 'dispose off', '27/11/2017'],
  ['516107', 'Asutosh Ray', 'Ballia', 'UTTAR PRADESH', 'Complaint', 'dispose off', '23/11/2017'],
  ['517456', 'Gopal dutta', 'Kolkata', 'WEST BENGAL', 'Complaint', 'dispose off', '24/11/2017'],
  ['519262', 'shahasan khan', 'Darbhanga', 'BIHAR', 'Complaint', 'dispose off', '25/11/2017'],
  ['313699', 'atul kumar', 'Gopalganj', 'BIHAR', 'Complaint', 'dispose off', '19/6/2017'],
  ['204427', 'anuradha', 'Bangalore', 'KARNATAKA', 'Query', 'dispose off', '24/3/2017'],
];
const columns = ['ID', 'Name', 'City', 'State', 'Type', 'Status', 'Date'];
const wrappingColumns = ['Name', 'State', 'Status'];
const hoveredId = '313699';

const CellText = styled.div<{ $wraps: boolean }>`
  margin-right: 17px;
  white-space: ${p => (p.$wraps ? 'normal' : 'nowrap')};
`;

const rowTone = (id: string, index: number) => {
  if (id === hoveredId) return '#f4f4f4';
  return index % 2 === 0 ? '#fafafa' : '#ffffff';
};

export default function App() {
  return (
    <Screen>
      <GlobalStyle />
      <Shell>
        <Sidebar>
          <MenuToggle><MdMenu /></MenuToggle>
          <NavList>
            <NavItem><MdDashboard /></NavItem>
            <NavItem><MdNotifications /></NavItem>
            <NavItem $active><MdSearch /></NavItem>
          </NavList>
        </Sidebar>
        <Main>
          <FilterCard>
            <Field $width={279} $end={20}>
              <FieldLabel>Search Query</FieldLabel>
              corruption
              <FieldIcon><MdSearch /></FieldIcon>
            </Field>
            <Field $width={268} $gap={17}>
              <FieldLabel>Start Date</FieldLabel>
              01/01/2017
              <FieldIcon><MdEvent /></FieldIcon>
            </Field>
            <Field $width={269} $gap={17}>
              <FieldLabel>End Date</FieldLabel>
              12/30/2017
              <FieldIcon><MdEvent /></FieldIcon>
            </Field>
            <Field $width={186} $gap={0} $end={7}>
              <FieldLabel>Search Type</FieldLabel>
              Semantic Search
              <FieldIcon><MdArrowDropDown /></FieldIcon>
            </Field>
            <Relevance>
              <RelevanceTitle>Relevance</RelevanceTitle>
              <Track><Thumb /></Track>
              <Marks>
                <span>Low</span>
                <MarkMuted>High</MarkMuted>
              </Marks>
            </Relevance>
            <SearchButton><MdSearch />SEARCH</SearchButton>
            <ResultCount>10,135 complaints found</ResultCount>
          </FilterCard>
          <Panels>
            <MapCard>
              <IndiaMap />
              <ZoomControl>
                <ZoomButton $first>
                  <svg width="14" height="14"><path d="M0.5 7h13M7 0.5v13" stroke="#000" strokeWidth="2.4" /></svg>
                </ZoomButton>
                <ZoomButton>
                  <svg width="14" height="14"><path d="M0.5 7h13" stroke="#000" strokeWidth="2.4" /></svg>
                </ZoomButton>
              </ZoomControl>
              <InfoPanel>
                <InfoTitle>Hover over a state</InfoTitle>
                <InfoText>View complaint data</InfoText>
              </InfoPanel>
              <LegendPanel>
                <LegendTitle>Complaint Distribution</LegendTitle>
                {ranges.map((range, i) => (
                  <LegendRow key={range}>
                    <Swatch $color={shades[i]} />
                    {range}
                  </LegendRow>
                ))}
              </LegendPanel>
              <Attribution>
                <Flag />
                <a>Leaflet</a> | © OpenStreetMap contributors
              </Attribution>
            </MapCard>
            <TableCard>
              <TableRow $head $tone="#f4f4f4">
                {columns.map(column => <Cell key={column}>{column}</Cell>)}
              </TableRow>
              {complaints.map((row, index) => (
                <TableRow key={row[0]} $tone={rowTone(row[0], index)}>
                  {row.map((value, i) => (
                    <Cell key={columns[i]}>
                      <CellText $wraps={wrappingColumns.includes(columns[i])}>{value}</CellText>
                    </Cell>
                  ))}
                </TableRow>
              ))}
              <Tooltip>
                fraud case.
                <TooltipArrow />
              </Tooltip>
            </TableCard>
          </Panels>
        </Main>
      </Shell>
      <Dock><DockHandle /></Dock>
    </Screen>
  );
}
